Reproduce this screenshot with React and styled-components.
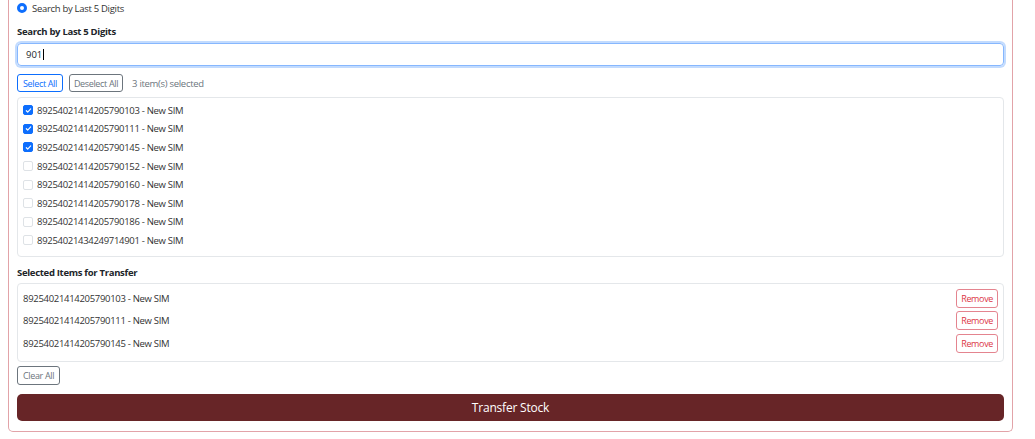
import React, { useState } from "react";
import styled, { createGlobalStyle } from "styled-components";

const GlobalStyle = createGlobalStyle`
  html, body {
    margin: 0;
    padding: 0;
    background: #ffffff;
    font-family: "Open Sans", "Noto Sans", sans-serif;
    color: #212529;
  }
`;

const sims = [
  "89254021414205790103",
  "89254021414205790111",
  "89254021414205790145",
  "89254021414205790152",
  "89254021414205790160",
  "89254021414205790178",
  "89254021414205790186",
  "89254021434249714901",
];

const Page = styled.div`
  padding: 0 22px 5px 8px;
`;

const Card = styled.div`
  border: 1px solid #e2a3a8;
  border-top: none;
  border-radius: 0 0 5px 5px;
  padding: 2px 8px 10px 8px;
  display: flex;
  flex-direction: column;
`;

const RadioRow = styled.label`
  display: flex;
  align-items: center;
  gap: 5px;
  height: 12px;
  font-size: 9.5px;
  letter-spacing: -0.3px;
  color: #333;
`;

const Radio = styled.span`
  width: 10px;
  height: 10px;
  box-sizing: border-box;
  border-radius: 50%;
  background: #fff;
  border: 3px solid #0d6efd;
`;

const Label = styled.div`
  font-size: 9.5px;
  font-weight: 700;
  letter-spacing: -0.3px;
  color: #212529;
  margin-top: 11px;
  height: 13px;
  line-height: 13px;
`;

const Input = styled.div`
  margin-top: 5px;
  height: 23px;
  box-sizing: border-box;
  border: 1px solid #86b7fe;
  border-radius: 4px;
  box-shadow: 0 0 0 2px rgba(13, 110, 253, 0.25);
  display: flex;
  align-items: center;
  padding-left: 8px;
  font-size: 9.5px;
  color: #212529;
`;

const Caret = styled.span`
  display: inline-block;
  width: 1px;
  height: 11px;
  background: #000;
  margin-left: 1px;
`;

const Toolbar = styled.div`
  margin-top: 8px;
  display: flex;
  align-items: center;
  gap: 6px;
  height: 18px;
`;

const OutlineButton = styled.button`
  font-family: inherit;
  font-size: 9px;
  letter-spacing: -0.35px;
  height: ${(p) => p.$h || 18}px;
  padding: 0 ${(p) => p.$px || 4}px;
  border-radius: 3px;
  background: #fff;
  border: 1px solid ${(p) => p.$border};
  color: ${(p) => p.$color};
  cursor: pointer;
  line-height: 1;
`;

const Count = styled.span`
  font-size: 9.5px;
  letter-spacing: -0.3px;
  color: #6c757d;
  margin-left: 3px;
`;

const ListBox = styled.div`
  margin-top: 5px;
  height: 160px;
  box-sizing: border-box;
  border: 1px solid #e4e7ea;
  border-radius: 4px;
  padding: 3px 5px 0;
  display: flex;
  flex-direction: column;
`;

const Option = styled.label`
  display: flex;
  align-items: center;
  gap: 4px;
  height: 18.6px;
  font-size: 9.5px;
  letter-spacing: -0.3px;
  color: #333;
`;

const Check = styled.span`
  width: 10px;
  height: 10px;
  box-sizing: border-box;
  border-radius: 2px;
  border: 1px solid ${(p) => (p.$on ? "#0d6efd" : "#dee2e6")};
  background: ${(p) => (p.$on ? "#0d6efd" : "#fff")};
  display: flex;
  align-items: center;
  justify-content: center;
`;

const Heading = styled(Label)`
  margin-top: 9px;
`;

const SelectedBox = styled.div`
  margin-top: 4px;
  height: 79px;
  box-sizing: border-box;
  border: 1px solid #e4e7ea;
  border-radius: 4px;
  padding: 3px 5px 0 5px;
  display: flex;
  flex-direction: column;
`;

const SelectedRow = styled.div`
  display: flex;
  align-items: center;
  justify-content: space-between;
  height: 22.6px;
  font-size: 9.5px;
  letter-spacing: -0.3px;
  color: #333;
`;

const ClearRow = styled.div`
  margin-top: 4px;
  display: flex;
`;

const Primary = styled.button`
  margin-top: 9px;
  height: 27px;
  border: none;
  border-radius: 5px;
  background: #672527;
  color: #fff;
  font-family: inherit;
  font-size: 12px;
  letter-spacing: -0.2px;
  cursor: pointer;
`;

function Tick() {
  return (
    <svg width="7" height="7" viewBox="0 0 16 16">
      <path d="M3 8.5l3.2 3L13 4.5" fill="none" stroke="#fff" strokeWidth="2.6" strokeLinecap="round" strokeLinejoin="round" />
    </svg>
  );
}

export default function App() {
  const [picked] = useState([0, 1, 2]);
  return (
    <Page>
      <GlobalStyle />
      <Card>
        <RadioRow>
          <Radio />
          Search by Last 5 Digits
        </RadioRow>
        <Label>Search by Last 5 Digits</Label>
        <Input>
          901<Caret />
        </Input>
        <Toolbar>
          <OutlineButton $border="#0d6efd" $color="#0d6efd" $px={5}>Select All</OutlineButton>
          <OutlineButton $border="#6c757d" $color="#6c757d" $px={4}>Deselect All</OutlineButton>
          <Count>{picked.length} item(s) selected</Count>
        </Toolbar>
        <ListBox>
          {sims.map((s, i) => (
            <Option key={s}>
              <Check $on={picked.includes(i)}>{picked.includes(i) && <Tick />}</Check>
              {s} - New SIM
            </Option>
          ))}
        </ListBox>
        <Heading>Selected Items for Transfer</Heading>
        <SelectedBox>
          {picked.map((i) => (
            <SelectedRow key={sims[i]}>
              <span>{sims[i]} - New SIM</span>
              <OutlineButton $border="#e4848f" $color="#dc3545" $h={19} $px={4}>Remove</OutlineButton>
            </SelectedRow>
          ))}
        </SelectedBox>
        <ClearRow>
          <OutlineButton $border="#6c757d" $color="#6c757d" $h={19} $px={5}>Clear All</OutlineButton>
        </ClearRow>
        <Primary>Transfer Stock</Primary>
      </Card>
    </Page>
  );
}
